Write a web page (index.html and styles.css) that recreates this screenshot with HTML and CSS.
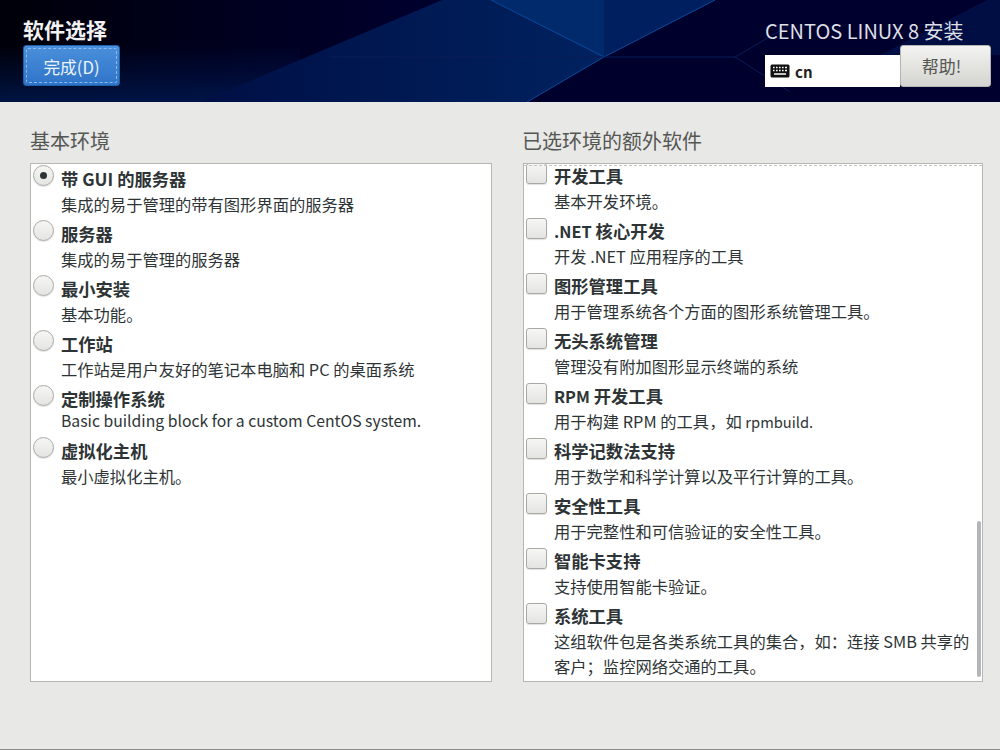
FILE: index.html
```html
<!DOCTYPE html>
<html lang="zh-CN">
<head>
<meta charset="utf-8">
<title>软件选择</title>
<link rel="stylesheet" href="styles.css">
</head>
<body>
<header class="topbar">
  <svg class="topbar-art" width="1000" height="102" viewBox="0 0 1000 102" aria-hidden="true">
    <defs>
      <linearGradient id="base" x1="0" y1="0" x2="1" y2="0">
        <stop offset="0" stop-color="#000008"/>
        <stop offset="0.2" stop-color="#00001c"/>
        <stop offset="0.4" stop-color="#00002c"/>
        <stop offset="1" stop-color="#00002e"/>
      </linearGradient>
      <linearGradient id="floor" x1="0" y1="0" x2="0" y2="1">
        <stop offset="0" stop-color="#001a55" stop-opacity="0"/>
        <stop offset="1" stop-color="#001a55" stop-opacity="0.75"/>
      </linearGradient>
      <linearGradient id="wedge" x1="0" y1="0" x2="1" y2="0">
        <stop offset="0" stop-color="#000f45"/>
        <stop offset="1" stop-color="#00225f"/>
      </linearGradient>
    </defs>
    <rect width="1000" height="102" fill="url(#base)"/>
    <rect y="45" width="300" height="57" fill="url(#floor)"/>
    <polygon points="442,0 491,0 604,57 527,102 260,102 200,102" fill="url(#wedge)"/>
    <polygon points="491,0 604,0 604,57" fill="#002a6c"/>
    <polygon points="604,0 715,0 604,57" fill="#001f5e"/>
    <polygon points="987,0 1000,0 1000,55 880,55" fill="#001a55" opacity="0.55"/>
    <path d="M491 0 604 57 715 0M604 57 527 102" fill="none" stroke="#0a4a9c" stroke-width="1"/>
    <path d="M735 57 790 25M735 57 790 92M604 57 735 57M330 57 604 57" fill="none" stroke="#0a1c58" stroke-width="1"/>
  </svg>
  <div class="spoke">
    <h1 class="spoke-title">软件选择</h1>
    <button class="btn-done"><span class="btn-done-focus">完成(D)</span></button>
  </div>
  <div class="meta">
    <div class="product">CENTOS LINUX 8 安装</div>
    <div class="meta-row">
      <div class="layout">
        <svg class="kbd" width="20" height="14" viewBox="0 0 20 14" aria-hidden="true">
          <rect x="0.5" y="0.5" width="19" height="13" rx="1.5" fill="#111"/>
          <path d="M3 3.5h1.6M6 3.5h1.6M9 3.5h1.6M12 3.5h1.6M15 3.5h2M3 6.5h1.6M6 6.5h1.6M9 6.5h1.6M12 6.5h1.6M15 6.5h2M4 10h12" stroke="#fff" stroke-width="1.4" fill="none"/>
        </svg>
        <span>cn</span>
      </div>
      <button class="btn-help">帮助!</button>
    </div>
  </div>
</header>

<main class="content">
  <section class="col">
    <h2 class="col-title">基本环境</h2>
    <div class="panel panel-left">
      <div class="row"><span class="radio on"></span><div class="txt"><div class="name">带 GUI 的服务器</div><div class="desc">集成的易于管理的带有图形界面的服务器</div></div></div>
      <div class="row"><span class="radio"></span><div class="txt"><div class="name">服务器</div><div class="desc">集成的易于管理的服务器</div></div></div>
      <div class="row"><span class="radio"></span><div class="txt"><div class="name">最小安装</div><div class="desc">基本功能。</div></div></div>
      <div class="row"><span class="radio"></span><div class="txt"><div class="name">工作站</div><div class="desc">工作站是用户友好的笔记本电脑和 PC 的桌面系统</div></div></div>
      <div class="row row-latin"><span class="radio"></span><div class="txt"><div class="name">定制操作系统</div><div class="desc">Basic building block for a custom CentOS system.</div></div></div>
      <div class="row"><span class="radio"></span><div class="txt"><div class="name">虚拟化主机</div><div class="desc">最小虚拟化主机。</div></div></div>
    </div>
  </section>
  <section class="col col-right">
    <h2 class="col-title">已选环境的额外软件</h2>
    <div class="panel panel-right">
      <div class="undershoot"></div>
      <div class="row"><span class="check"></span><div class="txt"><div class="name">开发工具</div><div class="desc">基本开发环境。</div></div></div>
      <div class="row"><span class="check"></span><div class="txt"><div class="name"><span class="latin-name">.NET</span> 核心开发</div><div class="desc">开发 .NET 应用程序的工具</div></div></div>
      <div class="row"><span class="check"></span><div class="txt"><div class="name">图形管理工具</div><div class="desc">用于管理系统各个方面的图形系统管理工具。</div></div></div>
      <div class="row"><span class="check"></span><div class="txt"><div class="name">无头系统管理</div><div class="desc">管理没有附加图形显示终端的系统</div></div></div>
      <div class="row"><span class="check"></span><div class="txt"><div class="name"><span class="latin-name">RPM</span> 开发工具</div><div class="desc">用于构建 RPM 的工具，如 <span class="latin">rpmbuild.</span></div></div></div>
      <div class="row"><span class="check"></span><div class="txt"><div class="name">科学记数法支持</div><div class="desc">用于数学和科学计算以及平行计算的工具。</div></div></div>
      <div class="row"><span class="check"></span><div class="txt"><div class="name">安全性工具</div><div class="desc">用于完整性和可信验证的安全性工具。</div></div></div>
      <div class="row"><span class="check"></span><div class="txt"><div class="name">智能卡支持</div><div class="desc">支持使用智能卡验证。</div></div></div>
      <div class="row"><span class="check"></span><div class="txt"><div class="name">系统工具</div><div class="desc desc-wrap">这组软件包是各类系统工具的集合，如：连接 SMB 共享的<br>客户；监控网络交通的工具。</div></div></div>
      <div class="scrollbar"></div>
    </div>
  </section>
</main>
</body>
</html>
```
FILE: styles.css
```css
* { box-sizing: border-box; }
html, body { margin: 0; height: 100%; }
body {
  width: 1000px;
  height: 750px;
  overflow: hidden;
  background: #e8e8e7;
  font-family: "Noto Sans CJK SC", "Noto Sans", sans-serif;
  color: #2e3436;
  border-bottom: 1px solid #8a8a88;
  display: flex;
  flex-direction: column;
}
.topbar {
  position: relative;
  height: 102px;
  flex: none;
  display: flex;
  justify-content: space-between;
  padding: 0 9px 0 23px;
  border-bottom: 1px solid #d0d0ce;
}
.topbar-art { position: absolute; left: 0; top: 0; }
.spoke, .meta { position: relative; }
.spoke-title {
  margin: 14px 0 0;
  font-size: 21px;
  line-height: 31px;
  height: 31px;
  font-weight: 700;
  color: #f2f2f2;
}
.btn-done {
  display: block;
  width: 97px;
  height: 41px;
  padding: 2px;
  border: 1px solid #1d5ea8;
  border-radius: 3px;
  background: linear-gradient(#4a90dc, #2f74c8);
  color: #eef4fb;
  font: inherit;
  font-size: 16.7px;
}
.btn-done-focus {
  display: block;
  height: 100%;
  line-height: 34px;
  border: 1px dashed #8dbaea;
  border-radius: 2px;
  padding-top: 1px;
}
.meta { width: 226px; }
.product {
  margin-top: 17px;
  font-size: 20px;
  line-height: 28px;
  color: #dcdfe6;
  white-space: nowrap;
}
.meta-row { display: flex; align-items: flex-end; height: 42px; }
.layout {
  width: 135px;
  height: 32px;
  background: #fff;
  display: flex;
  align-items: center;
  gap: 5px;
  padding-left: 5px;
  font-size: 15px;
  font-weight: 700;
  color: #222;
}
.kbd { flex: none; }
.btn-help {
  width: 91px;
  height: 42px;
  border: 1px solid #b4b4b0;
  border-radius: 3px;
  background: linear-gradient(#f3f3f1, #d4d4d0);
  color: #555753;
  font: inherit;
  font-size: 17px;
  padding: 0 8px 2px 0;
}
.content {
  display: flex;
  gap: 31px;
  padding: 25px 0 0 30px;
}
.col { width: 462px; }
.col-right { width: 460px; }
.col-title {
  margin: 0;
  font-size: 20px;
  line-height: 27px;
  height: 36px;
  font-weight: 400;
  color: #555753;
}
.col-right .col-title { margin-left: -1px; }
.panel {
  position: relative;
  height: 519px;
  background: #fff;
  border: 1px solid #b6b6b3;
  overflow: hidden;
}
.panel-left { padding-top: 1px; }
.undershoot {
  position: absolute;
  left: 0; right: 0; top: 1px;
  border-top: 1px dashed #c4c4c2;
}
.row { display: flex; height: 55px; padding-left: 2px; }
.row-latin { height: 52px; }
.txt { margin-top: 1px; }
.panel-right .txt { margin-top: -1px; }
.name {
  font-size: 17.3px;
  line-height: 25px;
  padding-bottom: 2px;
  font-weight: 700;
  color: #2e3436;
  white-space: nowrap;
}
.latin-name { font-size: 16.3px; line-height: 0; }
.desc {
  font-size: 16.3px;
  line-height: 23px;
  color: #2e3436;
  white-space: nowrap;
}
.desc-wrap { line-height: 25px; margin-top: -1px; }
.latin { font-size: 14.7px; line-height: 0; }
.row-latin .desc { font-size: 15.75px; line-height: 17px; margin-top: -1px; }
.radio, .check {
  flex: none;
  width: 21px;
  height: 21px;
  background: linear-gradient(#f6f6f5, #e4e4e2);
  border: 1px solid #a8a8a4;
  box-shadow: 0 1px 1px rgba(0,0,0,.12);
}
.radio {
  border-radius: 50%;
  margin-right: 7px;
  display: flex;
  align-items: center;
  justify-content: center;
}
.radio.on::after {
  content: "";
  width: 7px;
  height: 7px;
  border-radius: 50%;
  background: #2e3436;
}
.check {
  border-radius: 3px;
  margin-top: -1px;
  margin-right: 7px;
}
.scrollbar {
  position: absolute;
  right: 1px;
  top: 357px;
  width: 4px;
  height: 156px;
  border-radius: 2px;
  background: #b2b6b8;
}
```
